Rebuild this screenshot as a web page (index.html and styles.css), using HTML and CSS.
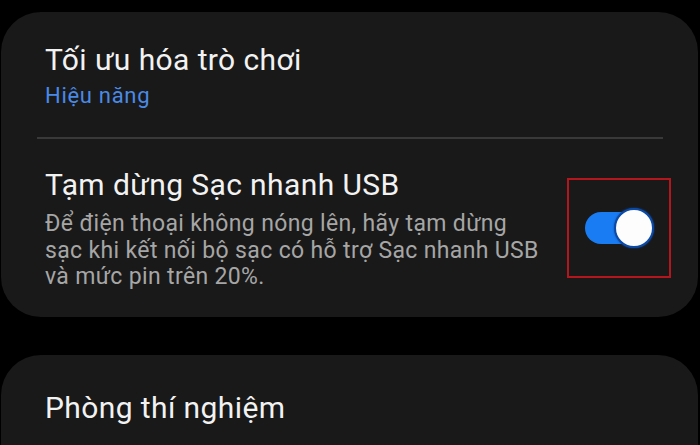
FILE: index.html
```html
<!DOCTYPE html>
<html lang="vi">
<head>
    <meta charset="UTF-8">
    <meta name="viewport" content="width=device-width, initial-scale=1.0">
    <title>Cài đặt</title>
    <link rel="stylesheet" href="styles.css">
</head>
<body>

    <div class="card">
        <div class="row">
            <div class="title">Tối ưu hóa trò chơi</div>
            <div class="sub">Hiệu năng</div>
        </div>

        <div class="divider"></div>

        <div class="row row-switch">
            <div class="text">
                <div class="title">Tạm dừng Sạc nhanh USB</div>
                <div class="desc">Để điện thoại không nóng lên, hãy tạm dừng sạc khi kết nối bộ sạc có hỗ trợ Sạc nhanh USB và mức pin trên 20%.</div>
            </div>
            <div class="mark">
                <div class="switch">
                    <span class="knob"></span>
                </div>
            </div>
        </div>
    </div>

    <div class="card card-last">
        <div class="row">
            <div class="title">Phòng thí nghiệm</div>
        </div>
    </div>

</body>
</html>
```

FILE: styles.css
```css
html, body {
    height: 445px;
    overflow: hidden;
}

body {
    margin: 0;
    padding: 0;
    background-color: #000;
    font-family: 'Roboto', 'Noto Sans', sans-serif;
    color: #f2f2f2;
}

/* khối thẻ cài đặt */
.card {
    background-color: #191919;
    border-radius: 40px;
    margin: 12px 2px 0 1px;
    padding-bottom: 26px;
}

.card-last {
    margin-top: 38px;
    padding-top: 35px;
    padding-bottom: 19px;
    border-radius: 40px 40px 0 0;
}

.row {
    padding: 30px 45px 0 44px;
}

.card-last .row {
    padding-top: 0;
}

.title {
    font-size: 30px;
    line-height: 36px;
    letter-spacing: 0.4px;
}

.sub {
    margin-top: 5px;
    font-size: 22px;
    line-height: 26px;
    letter-spacing: 0.7px;
    color: #4a8ae6;
}

.divider {
    height: 2px;
    background-color: #393939;
    margin: 28px 35px 0 36px;
}

/* hàng có công tắc */
.row-switch {
    display: flex;
    align-items: flex-start;
    padding-top: 28px;
}

.text {
    flex: 1;
}

.desc {
    margin-top: 8px;
    width: 500px;
    font-size: 23px;
    line-height: 26.5px;
    letter-spacing: 0.35px;
    color: #a6a6a6;
}

.mark {
    width: 100px;
    height: 96px;
    border: 2px solid #b3161c;
    margin: 11px -18px 0 0;
    display: flex;
    align-items: center;
    justify-content: center;
}

.switch {
    position: relative;
    width: 66px;
    height: 32px;
    border-radius: 16px;
    background-color: #1a7cf2;
    margin-left: -3px;
}

.knob {
    position: absolute;
    right: -3px;
    top: -4px;
    width: 36px;
    height: 36px;
    border-radius: 50%;
    background-color: #fdfdfd;
    border: 2px solid #0c4aa8;
    box-shadow: 0 0 2px #0c4aa8;
}
```
